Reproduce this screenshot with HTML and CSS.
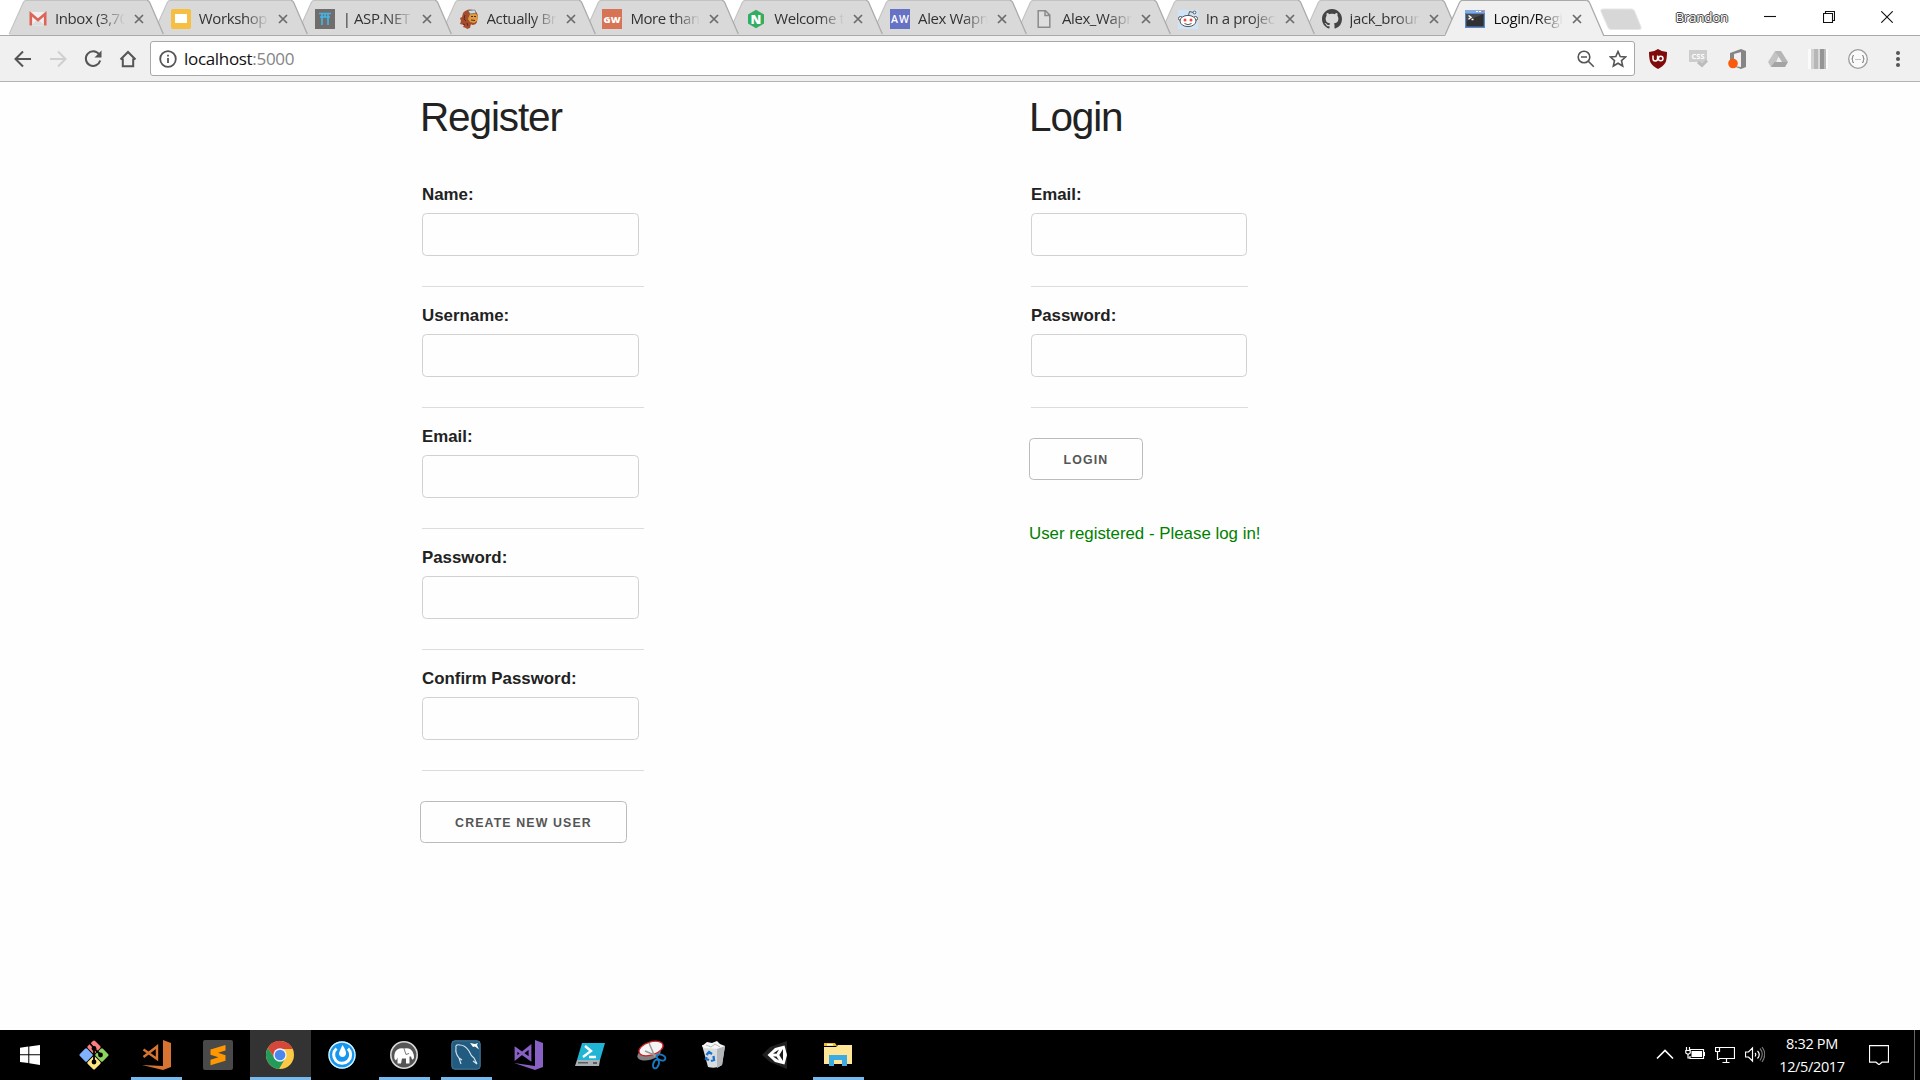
FILE: index.html
```html
<!DOCTYPE html>
<html lang="en">
<head>
<meta charset="utf-8">
<title>Login/Register</title>
<link rel="stylesheet" href="styles.css">
</head>
<body>
<svg class="defs" width="0" height="0">
  <symbol id="tab-shape" viewBox="0 0 160 36"><path class="tab-fill" d="M0 36 L.5 35 L14.500 2.500 Q15.500 .5 17.500 .5 H141.500 Q143.500 .5 144.500 2.500 L158 35 V36Z"/><path class="tab-edge-left" d="M0 35 L14.500 2.500 Q15.500 .5 17.500 .5 H141.500"/><path class="tab-edge-right" d="M141.500 .5 Q143.500 .5 144.500 2.500 L158.500 35"/></symbol>
  <symbol id="x" viewBox="0 0 10 10"><path d="M1 1 L9 9 M9 1 L1 9" fill="none" stroke="currentColor" stroke-width="1.700"/></symbol>
  <symbol id="octocat" viewBox="0 0 16 16"><path fill="#444" d="M8 0C3.580 0 0 3.580 0 8c0 3.540 2.290 6.530 5.470 7.590.4.070.55-.17.55-.38 0-.19-.01-.82-.01-1.490-2.010.37-2.530-.49-2.690-.94-.09-.23-.48-.94-.82-1.130-.28-.15-.68-.52-.01-.53.63-.01 1.080.58 1.230.82.720 1.210 1.870.87 2.330.66.070-.52.280-.87.510-1.070-1.780-.2-3.640-.89-3.640-3.950 0-.87.310-1.590.820-2.150-.08-.2-.36-1.020.080-2.120 0 0 .670-.21 2.200.820.640-.18 1.320-.27 2-.27s1.360.09 2 .27c1.530-1.040 2.200-.82 2.200-.82.440 1.100.160 1.920.080 2.120.510.560.820 1.270.820 2.150 0 3.070-1.870 3.750-3.650 3.950.290.250.540.730.540 1.480 0 1.070-.01 1.930-.01 2.200 0 .210.150.460.550.380A8.010 8.010 0 0016 8c0-4.420-3.580-8-8-8z"/></symbol>
</svg>

<header class="browser">
  <div class="tabstrip">
    <div class="tabs">
      <div class="tab"><svg class="shape"><use href="#tab-shape"/></svg>
        <svg class="fav" viewBox="0 0 20 20"><path fill="#efefef" d="M3 3h16v13.500H3z"/><path fill="#dcdcdc" d="M5 16l6-6 6 6z"/><path fill="none" stroke="#de6358" stroke-width="2.600" d="M3.800 16.500V4.800L11 11l7.200-6.200v11.700"/></svg>
        <span class="title">Inbox (3,700)</span><svg class="close"><use href="#x"/></svg></div>
      <div class="tab"><svg class="shape"><use href="#tab-shape"/></svg>
        <svg class="fav" viewBox="0 0 20 20"><rect width="20" height="20" rx="2" fill="#f6bf42"/><path fill="#fff" d="M4 5h12v9H4z"/></svg>
        <span class="title">Workshop -</span><svg class="close"><use href="#x"/></svg></div>
      <div class="tab"><svg class="shape"><use href="#tab-shape"/></svg>
        <svg class="fav" viewBox="0 0 20 20"><path fill="#716d6c" d="M0 0h20v20H0z"/><path fill="none" stroke="#42b4e6" stroke-width="1.700" d="M4 4.500h12M5 8h10M7 4.500V16M13 4.500V16M10 4.500V8"/></svg>
        <span class="title">| ASP.NET C</span><svg class="close"><use href="#x"/></svg></div>
      <div class="tab"><svg class="shape"><use href="#tab-shape"/></svg>
        <svg class="fav" viewBox="0 0 20 20"><path fill="#a64c2c" d="M4 4Q8-1 14 1q5 2 5 7-1 2-1 5-1 3-5 3l-1-1-1 4-3 1-1-1-3-1 1-2-4-1 1-3-1-3 2-1z"/><path fill="#de9a3e" d="M11 5l5-1 3 3-1 5-3 2-4-1-2-3z"/><path fill="#bfe3ee" stroke="#775846" stroke-width=".6" d="M9 1.500l7-.5 1 3-6 1z"/><path fill="none" stroke="#542c23" d="M12 7.500h2m1 0h2M12 11l4 .5M6 6l-1 4 2 2M8 14l1 3M4 15l2 1"/></svg>
        <span class="title">Actually Bra</span><svg class="close"><use href="#x"/></svg></div>
      <div class="tab"><svg class="shape"><use href="#tab-shape"/></svg>
        <svg class="fav" viewBox="0 0 20 20"><path fill="#d77455" d="M0 0h20v20H0z"/><text class="fav-text" x="10" y="13.800" font-size="9.500" textLength="17">GW</text></svg>
        <span class="title">More than y</span><svg class="close"><use href="#x"/></svg></div>
      <div class="tab"><svg class="shape"><use href="#tab-shape"/></svg>
        <svg class="fav" viewBox="0 0 20 20"><path fill="#32ae60" d="M10 .8l8 4.600v9.200l-8 4.600-8-4.600V5.400z"/><text class="fav-text" x="10" y="14.600" font-size="13">N</text></svg>
        <span class="title">Welcome to</span><svg class="close"><use href="#x"/></svg></div>
      <div class="tab"><svg class="shape"><use href="#tab-shape"/></svg>
        <svg class="fav" viewBox="0 0 20 20"><path fill="#6672c4" d="M0 0h20v20H0z"/><text class="fav-text aw" x="10" y="13.600" font-size="10.500" textLength="18">AW</text></svg>
        <span class="title">Alex Wapnia</span><svg class="close"><use href="#x"/></svg></div>
      <div class="tab"><svg class="shape"><use href="#tab-shape"/></svg>
        <svg class="fav" viewBox="0 0 20 20"><path fill="#dedede" stroke="#8b8b8b" stroke-width="1.500" d="M4.200 1.800h7.300l4.300 4.300v12.100H4.200zM11 2v4.600h4.800"/></svg>
        <span class="title">Alex_Wapnia</span><svg class="close"><use href="#x"/></svg></div>
      <div class="tab"><svg class="shape"><use href="#tab-shape"/></svg>
        <svg class="fav" viewBox="0 0 20 20"><path fill="#cfe5f7" d="M0 1h20v19H0z"/><g fill="#fff" stroke="#555" stroke-width="1"><circle cx="2.500" cy="9.500" r="2"/><circle cx="17.500" cy="9.500" r="2"/><ellipse cx="10" cy="12" rx="8" ry="5.600"/><path fill="none" d="M10.500 6.500l1-4 4 1"/><circle cx="16.500" cy="3.500" r="1.400"/><path fill="none" d="M6.500 14.500q3.500 2.500 7 0"/></g><circle cx="7" cy="11" r="1.500" fill="#f04a41"/><circle cx="13" cy="11" r="1.500" fill="#f04a41"/></svg>
        <span class="title">In a project,</span><svg class="close"><use href="#x"/></svg></div>
      <div class="tab"><svg class="shape"><use href="#tab-shape"/></svg>
        <svg class="fav"><use href="#octocat"/></svg>
        <span class="title">jack_brount</span><svg class="close"><use href="#x"/></svg></div>
      <div class="tab active"><svg class="shape"><use href="#tab-shape"/></svg>
        <svg class="fav" viewBox="0 0 20 20"><path fill="#5a87c9" d="M0 1h20v18H0z"/><path fill="#83aade" d="M0 1h20v3H0z"/><path fill="#303133" d="M1.300 5h17.400v12.500H1.300z"/><path fill="#484a4e" d="M1.300 5h17.400L1.300 12z"/><path fill="none" stroke="#fff" stroke-width="1.400" d="M3.500 6.500L6 8.300 3.500 10.200M6.500 10.500h2"/><path fill="#fff" d="M11 2h2v1h-2zM14 2h2v1h-2z"/><path fill="#e86565" d="M16.500 1.800h2v1.500h-2z"/></svg>
        <span class="title">Login/Regist</span><svg class="close"><use href="#x"/></svg></div>
    </div>
    <svg class="newtab" viewBox="0 0 44 24"><path fill="#d7d7d7" stroke="#e6e6e6" d="M4 1h28.500q2 0 3 2l6.500 16q1 2.500-2 2.500H12q-2 0-3-2L2 3.500Q1 1 4 1z"/></svg>
    <span class="profile">Brandon</span>
    <div class="winbuttons">
      <svg viewBox="0 0 12 12"><path d="M0 5.500h12"/></svg>
      <svg viewBox="0 0 12 12"><path d="M.5 2.500h9v9h-9zM2.500 2.500V.5h9v9H9.500"/></svg>
      <svg viewBox="0 0 12 12"><path d="M.3.300l11.400 11.400M11.700.300L.3 11.700"/></svg>
    </div>
  </div>

  <div class="toolbar">
    <nav class="navbuttons">
      <svg viewBox="0 0 20 20"><path d="M18 10H3M10 2.500L2.500 10l7.500 7.500"/></svg>
      <svg class="disabled" viewBox="0 0 20 20"><path d="M2 10h15M10 2.500l7.500 7.500-7.500 7.500"/></svg>
      <svg viewBox="0 0 20 20"><path d="M16 5.200A7.300 7.300 0 1 0 17.200 11.500"/><path fill="#555" stroke="none" d="M18.500 1.500v7h-7z"/></svg>
      <svg viewBox="0 0 20 20"><path d="M2.500 10.500L10 3l7.500 7.500M4.800 9.500v7.700h10.400V9.500"/></svg>
    </nav>
    <div class="omnibox">
      <svg class="info" viewBox="0 0 18 18"><circle cx="9" cy="9" r="7.800"/><path d="M9 8v5M9 4.700v1.800"/></svg>
      <span class="url">localhost<span>:5000</span></span>
      <svg class="omni-icon" viewBox="0 0 18 18"><circle cx="7" cy="7" r="5.800"/><path d="M11.300 11.300l5.500 5.500M4 7h6"/></svg>
      <svg class="omni-icon" viewBox="0 0 18 18"><path d="M9 1.500l2.200 5 5.400.5-4.100 3.600 1.200 5.400L9 13.200 4.300 16l1.200-5.400L1.400 7l5.400-.5z"/></svg>
    </div>
    <div class="extensions">
      <svg viewBox="0 0 20 20"><path fill="#800a0b" d="M10 0q4 3 9 3 0 7-1.500 10.500Q15.500 17 10 20 4.500 17 2.500 13.500 1 10 1 3q5 0 9-3z"/><path fill="none" stroke="#fff" stroke-width="1.500" d="M5 6.500v3q0 2.500 2.300 2.500T9.600 9.500v-3"/><circle cx="12.700" cy="9.500" r="2.300" fill="none" stroke="#fff" stroke-width="1.500"/></svg>
      <svg viewBox="0 0 20 20"><path fill="#cdcdcd" d="M1 1h18v12h-4l-2 4-3-4H1z"/><text x="10" y="10" class="ext-text">CSS</text><path fill="none" stroke="#bcbcbc" stroke-width="3" d="M10 13l4 3.500 5-5"/></svg>
      <svg viewBox="0 0 20 20"><path fill="#858585" d="M2 4l11-4v3L6 5v10H2zM13 0l5 2v16l-5 2-8-3 8 1z"/><circle cx="5" cy="14.500" r="4.800" fill="#fa5a0b"/></svg>
      <svg viewBox="0 0 20 20"><path fill="#c3c3c3" d="M7 2h6L6 18H3L0 13z"/><path fill="#b5b5b5" d="M7 2h6l7 11h-6z"/><path fill="#a4a4a4" d="M6.500 13H20l-3 5H3z"/></svg>
      <svg viewBox="0 0 20 20"><path fill="#fafafa" d="M0 0h20v20H0z"/><path fill="#d2d2d2" d="M3 0h3v20H3z"/><path fill="#b7b7b7" d="M6 0h4v20H6z"/><path fill="#d8d8d8" d="M10 0h2v20h-2z"/><path fill="#959595" d="M12 0h4v20h-4z"/><path fill="#bbb" d="M16 0h2v20h-2z"/></svg>
      <svg viewBox="0 0 20 20"><circle cx="10" cy="10" r="9.300" fill="#fafafa" stroke="#9c9c9c" stroke-width="1.300"/><path fill="none" stroke="#888" stroke-width="1.100" d="M6 6.500q-1.500 0-1.300 1.500 0 2-1.200 2 1.200 0 1.200 2-.2 1.500 1.300 1.500M14 6.500q1.500 0 1.300 1.500 0 2 1.200 2-1.200 0-1.200 2 .2 1.500-1.300 1.500M7.500 10.500h1M9.500 10.500h1M11.500 10.500h1"/></svg>
      <svg viewBox="0 0 20 20" fill="#555"><circle cx="10" cy="4" r="2"/><circle cx="10" cy="10" r="2"/><circle cx="10" cy="16" r="2"/></svg>
    </div>
  </div>
</header>

<main class="page">
  <section class="register">
    <h1>Register</h1>
    <form>
      <div class="field"><label for="name">Name:</label><input id="name"></div>
      <div class="field"><label for="username">Username:</label><input id="username"></div>
      <div class="field"><label for="email">Email:</label><input id="email"></div>
      <div class="field"><label for="password">Password:</label><input id="password" type="password"></div>
      <div class="field"><label for="confirm">Confirm Password:</label><input id="confirm" type="password"></div>
      <button type="button">Create New User</button>
    </form>
  </section>
  <section class="login">
    <h1>Login</h1>
    <form>
      <div class="field"><label for="lemail">Email:</label><input id="lemail"></div>
      <div class="field"><label for="lpassword">Password:</label><input id="lpassword" type="password"></div>
      <button type="button">Login</button>
    </form>
    <p class="success">User registered - Please log in!</p>
  </section>
</main>

<footer class="taskbar">
  <div class="start"><svg viewBox="0 0 20 20" width="20" height="20"><path fill="#fff" d="M0 2.800L8.300 1.600v7.700H0zM9.300 1.400L20 0v9.300H9.300zM0 10.300h8.300V18L0 17zM9.300 10.300H20V20L9.300 18.300z"/></svg></div>
  <div class="apps">
    <div class="app"><svg viewBox="0 0 30 30"><g><rect x="9.900" y="2" width="10.200" height="10.200" rx="1.500" transform="rotate(45 15 7.100)" fill="#fb7f82"/><rect x="2" y="9.900" width="10.200" height="10.200" rx="1.500" transform="rotate(45 7.100 15)" fill="#80b3ff"/><rect x="17.800" y="9.900" width="10.200" height="10.200" rx="1.500" transform="rotate(45 22.900 15)" fill="#8cd35f"/><rect x="9.900" y="17.800" width="10.200" height="10.200" rx="1.500" transform="rotate(45 15 22.900)" fill="#ffe680"/></g><path fill="none" stroke="#000" stroke-width="1.800" d="M10.500 3L15 8v14M15 8.500l7 6.500"/><circle cx="15" cy="8.500" r="2.400"/><circle cx="15" cy="22" r="2.400"/><circle cx="21.500" cy="15" r="2.400"/></svg></div>
    <div class="app open"><svg viewBox="0 0 30 30"><path fill="#d77432" d="M22 0l8 3v24l-8 3-21-5 21 1z"/><path fill="none" stroke="#d77432" stroke-width="2.400" d="M2.500 9.500L16 19V6.500L2.500 17"/></svg></div>
    <div class="app"><svg viewBox="0 0 30 30"><rect width="30" height="30" rx="2" fill="#494949"/><path fill="#ff9800" d="M7.500 9.500L22.500 5v5.500l-7.500 2.300 7.500 2.500v5.500l-15 4.500v-5.500l8-2.500-8-2.500z"/></svg></div>
    <div class="app open current"><svg viewBox="0 0 30 30"><circle cx="15" cy="15" r="14" fill="#fbc944"/><path fill="#229a5a" d="M2.900 8A14 14 0 0 0 14 29l6.500-11L15 15 9 17z"/><path fill="#d5473b" d="M2.900 8L9 17l6-8h12.800A14 14 0 0 0 2.900 8z"/><circle cx="15" cy="15" r="6.700" fill="#f1f1f1"/><circle cx="15" cy="15" r="5.300" fill="#4a86ec"/></svg></div>
    <div class="app"><svg viewBox="0 0 30 30"><circle cx="15" cy="15" r="13.700" fill="#1696ec"/><circle cx="15" cy="15" r="13" fill="none" stroke="#def3ff" stroke-width="1.300"/><path fill="none" stroke="#fff" stroke-width="3" d="M9.500 8.500A8.500 8.500 0 1 0 21 8.700"/><path fill="#fff" d="M15.500 5q4 6 3.500 9-.8 3-3.500 3T12 14q0-2 3.500-9z"/></svg></div>
    <div class="app open"><svg viewBox="0 0 30 30"><circle cx="15" cy="15" r="13.200" fill="#555" stroke="#d8d8d8" stroke-width="1.600"/><path fill="#fff" d="M5.500 19q-1-7 3-9.500 3-2 6.500-1 6-1.500 8.500 3 1.500 3 1.500 6-.3 2.500-2 2l-1-3-1.500 0v7h-3.500v-5l-4 0-1 5H8.500v-6l-1.500 3z"/><path stroke="#777" fill="none" d="M15 8.500l2 6 3-1"/></svg></div>
    <div class="app open"><svg viewBox="0 0 30 30"><rect x=".8" y=".8" width="28.400" height="28.400" rx="3" fill="#215b80" stroke="#4a7fa2"/><path fill="none" stroke="#d9e5ec" stroke-width="1.100" d="M10 24L8 18Q4 13 5 8 4 4 9 5q5 0 9 6 2 5 5 7l3 6-4-3M8 18l3 2"/><path fill="#fff" d="M19 3l3 4 2-.5 4 3-2-4.500 1-2-3 1z"/></svg></div>
    <div class="app"><svg viewBox="0 0 30 30"><path fill="#8960c4" d="M22 0l8 3v24l-8 3-21-7 21 3z"/><path fill="none" stroke="#8960c4" stroke-width="2.800" d="M3 9l14 10V7L3 18z"/></svg></div>
    <div class="app"><svg viewBox="0 0 30 30"><path fill="#20b5d4" d="M7 3h23l-5 17H2z"/><path fill="#a9afb2" d="M2 20h23l-1 6H0z"/><path fill="none" stroke="#fff" stroke-width="2.400" d="M10 6l6 5-8 6M14 17h7"/><path fill="#596064" d="M3 22h10v1.500H3zM18 22h4v2h-4z"/></svg></div>
    <div class="app"><svg viewBox="0 0 30 30"><ellipse cx="12" cy="14" rx="12" ry="6" transform="rotate(-15 12 14)" fill="#818181"/><ellipse cx="14" cy="8.500" rx="12.500" ry="6.500" transform="rotate(-18 14 8.500)" fill="#f4f4f4" stroke="#cb2024" stroke-width="1.300"/><path stroke="#999" stroke-width="1.500" d="M12 3l6 14M8 11l12 5"/><g fill="none" stroke="#1878c0" stroke-width="2"><ellipse cx="24" cy="17.500" rx="4.500" ry="2.800" transform="rotate(20 24 17.500)"/><ellipse cx="19" cy="24" rx="2.700" ry="4.500" transform="rotate(20 19 24)"/></g></svg></div>
    <div class="app"><svg viewBox="0 0 30 30"><path fill="#d9dcdd" d="M3 5l23 1-3 19q-5 4-14 2z"/><path fill="#f6f6f6" d="M3 6l5-4 5 1 5-2 3 3 5 2-5 3-16-1z"/><path fill="#b2b6b8" d="M18 9l8-3-3 19-5 3z"/><path fill="none" stroke="#999" stroke-width=".7" d="M7 5l5 2 4-3 5 3"/><path fill="none" stroke="#1671d1" stroke-width="2.300" d="M7.500 15l2.500-3 3 2M14.500 16l.5 4-3 1M10 20l-3-1 .5-2"/></svg></div>
    <div class="app"><svg viewBox="0 0 30 30"><path fill="#202020" d="M1 15L9 7 26 1v28L9 22z"/><path fill="#fff" d="M6.500 15L14 8l9.500-2.500L26 15l-2.500 9.500L14 22z"/><path fill="#1c1c1c" d="M12 13.500L18 9.500 15.500 13.700zM12 16.500h3.500l2.500 4zM18.300 15L22 9v12z"/></svg></div>
    <div class="app open"><svg viewBox="0 0 30 30"><path fill="#f2bb30" d="M1 3h11l2 3H1z"/><path fill="#ffe596" d="M1 7h12l2-2h14v19H1z"/><path fill="#fff" d="M4 4h6v1.500H4z"/><path fill="#3cabe3" d="M6 15h18v11h-5v-6h-8v6H6z"/></svg></div>
  </div>
  <div class="tray">
    <svg class="chevron" viewBox="0 0 20 20"><path d="M2 14.500l8-8 8 8"/></svg>
    <svg viewBox="0 0 20 20"><path d="M5 5.500h13.500v9H5V12M18.500 8.500h1v3h-1"/><path fill="#fff" stroke="none" d="M6.500 7h10.500v6H6.500z"/><path d="M1.500 3v3M4.500 3v3M.5 6.500h5M.8 6v3l2.200 1.500 2.200-1.500V6M3 10.500v3.500h2"/></svg>
    <svg viewBox="0 0 20 20"><path d="M5 3.500h14.500v11H4M11.500 14.500V18M7.500 18.500h7M.5 3.500h4v4h-4zM2.500 7.500v8h2"/></svg>
    <svg viewBox="0 0 20 20"><path d="M.5 8h3l4-4v13l-4-4h-3zM10 9q1.500 1.500 0 3.500M12.500 7q3.500 3.500 0 7.500"/><path stroke="#777" d="M15 4.500q4.500 5.500 0 12M17 3q5.500 7 0 15"/></svg>
    <div class="clock"><span>8:32 PM</span><span>12/5/2017</span></div>
    <svg class="notify" viewBox="0 0 20 20"><path d="M.5.700h19v16.500h-6.500l-3 2.500-3-2.500H.5z"/></svg>
  </div>
  <div class="peek"></div>
</footer>
</body>
</html>
```

FILE: styles.css
```css
* { box-sizing: border-box; }
body { margin: 0; width: 1920px; height: 1080px; overflow: hidden; display: flex; flex-direction: column; background: #fefefe; font-family: "Liberation Sans", Arial, sans-serif; }
svg { display: block; flex: none; }
.defs { position: absolute; }

/* Tab strip */
.browser { flex: none; font-family: "Open Sans", "Noto Sans", sans-serif; }
.tabstrip { height: 36px; display: flex; background: #fff; box-shadow: inset 0 -1px #a9a9a9; }
.tabs { display: flex; padding-left: 7px; isolation: isolate; }
.tab { position: relative; flex: none; width: 160px; height: 36px; margin-right: -16.170px; padding: 9px 22px 0 20px; display: flex; color: #333; --fill: #d9d9d9; --left: #c3c3c3; --right: #aaa; }
.tab:nth-child(1) { z-index: 10; }
.tab:nth-child(2) { z-index: 9; }
.tab:nth-child(3) { z-index: 8; }
.tab:nth-child(4) { z-index: 7; }
.tab:nth-child(5) { z-index: 6; }
.tab:nth-child(6) { z-index: 5; }
.tab:nth-child(7) { z-index: 4; }
.tab:nth-child(8) { z-index: 3; }
.tab:nth-child(9) { z-index: 2; }
.tab:nth-child(10) { z-index: 1; }
.tab.active { z-index: 11; color: #111; margin-right: 0; --fill: #f0f0f0; --left: #aaa; }
.tab .shape { position: absolute; left: 0; top: 0; width: 160px; height: 35px; z-index: -1; overflow: hidden; }
.tab .shape use { width: 160px; height: 36px; }
.tab.active .shape { height: 36px; }
.tab-fill { fill: var(--fill); }
.tab-edge-left { fill: none; stroke: var(--left); stroke-width: 1.2; }
.tab-edge-right { fill: none; stroke: var(--right); stroke-width: 1.3; }
.fav { width: 20px; height: 20px; }
.fav-text { fill: #fff; font-family: "Open Sans", sans-serif; font-weight: 800; text-anchor: middle; }
.fav-text.aw { font-weight: 600; }
.title { width: 70px; height: 22px; margin: -1px 0 0 8px; font-size: 15px; line-height: 21px; letter-spacing: -.4px; white-space: nowrap; overflow: hidden; -webkit-mask-image: linear-gradient(90deg, #000 65%, transparent 100%); mask-image: linear-gradient(90deg, #000 65%, transparent 100%); }
.close { width: 10px; height: 10px; margin: 5px 0 0 9px; color: #6b6b6b; }
.newtab { width: 44px; height: 24px; margin: 8px 0 0 -6px; }
.profile { margin: 7px 0 0 32px; width: 53px; height: 20px; font-size: 13.500px; line-height: 20px; letter-spacing: -.3px; color: #fff; text-shadow: 1px 0 #444, -1px 0 #444, 0 1px #444, 0 -1px #444; }
.winbuttons { display: flex; gap: 46.400px; margin: 11px 0 0 36px; }
.winbuttons svg { width: 12px; height: 12px; fill: none; stroke: #111; stroke-width: 1.100; }

/* Toolbar */
.toolbar { height: 46px; display: flex; align-items: flex-start; background: #f0f0f0; border-bottom: 1px solid #b3b3b3; }
.navbuttons { display: flex; gap: 15px; padding: 13px 0 0 13px; width: 150px; }
.navbuttons svg { width: 20px; height: 20px; fill: none; stroke: #555; stroke-width: 2; }
.navbuttons .disabled { stroke: #cfcfcf; }
.omnibox { width: 1485px; height: 35px; margin-top: 5px; padding: 0 7px 0 8px; display: flex; align-items: center; background: #fff; border: 1px solid #a8a8a8; border-radius: 3px; }
.info { width: 18px; height: 18px; fill: none; stroke: #555; stroke-width: 1.800; }
.url { flex: 1; margin-left: 7px; font-size: 17px; letter-spacing: -.32px; line-height: 24px; color: #111; }
.url span { color: #858585; }
.omni-icon { width: 18px; height: 18px; margin-left: 14px; fill: none; stroke: #555; stroke-width: 1.600; }
.extensions { display: flex; gap: 20px; padding: 13px 0 0 13px; }
.extensions svg { width: 20px; height: 20px; }
.ext-text { font: 700 7.500px "Open Sans", sans-serif; fill: #fff; text-anchor: middle; }

/* Page */
.page { flex: 1; display: flex; padding-left: 420px; color: #222; }
.register { width: 609px; }
h1 { margin: 8px 0 0; font-size: 40.500px; font-weight: 400; line-height: 54px; letter-spacing: -1.125px; }
form { margin-top: 34px; }
.field { width: 222px; height: 109px; margin: 0 0 12px 2px; border-bottom: 1px solid #dcdcdc; }
.login .field { width: 217px; }
label { display: block; padding-top: 3px; font-size: 16.875px; font-weight: 700; line-height: 27px; height: 35px; }
input { display: block; width: 217px; height: 43px; padding: 0; background: #fefefe; border: 1px solid #d1d1d1; border-radius: 4.500px; }
.login input { width: 216px; }
button { display: block; width: 207px; height: 42px; margin-top: 30px; padding: 2px 0 0; background: #fefefe; border: 1px solid #bbb; border-radius: 4.500px; color: #555; font: 600 12.375px "Liberation Sans", Arial, sans-serif; letter-spacing: 1.125px; text-transform: uppercase; }
.login button { width: 114px; }
.success { margin: 40px 0 0; font-size: 16.875px; line-height: 27px; color: #008000; }

/* Taskbar */
.taskbar { height: 50px; flex: none; display: flex; background: #000; font-family: "Open Sans", "Noto Sans", sans-serif; }
.start { width: 64px; padding: 15px 0 0 20px; }
.apps { display: flex; gap: 1px; }
.app { width: 61px; height: 50px; padding: 10px 0 0 15px; }
.app svg { width: 30px; height: 30px; }
.app.open { background: linear-gradient(#76b9ed, #76b9ed) 5px 47px / 51px 3px no-repeat; }
.app.current { background: linear-gradient(#76b9ed, #76b9ed) 0 47px / 61px 3px no-repeat #333; }
.tray { display: flex; gap: 10px; margin-left: auto; padding-top: 14px; }
.tray svg { width: 20px; height: 20px; fill: none; stroke: #fff; stroke-width: 1.200; }
.tray .chevron { stroke-width: 1.600; }
.clock { width: 74px; margin-top: -12px; display: flex; flex-direction: column; align-items: center; color: #fff; font-size: 14.500px; letter-spacing: -.35px; line-height: 23px; white-space: nowrap; }
.tray .notify { margin: 1px 25px 0 10px; }
.peek { width: 6px; border-left: 1px solid #666; }
```
